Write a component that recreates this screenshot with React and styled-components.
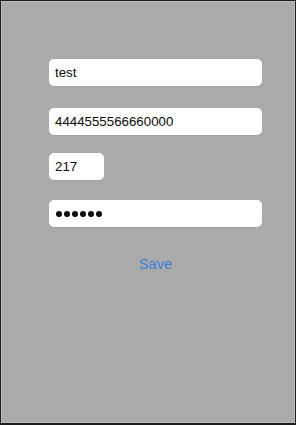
import React from "react";
import styled, { createGlobalStyle } from "styled-components";

const Global = createGlobalStyle`
  html, body { margin: 0; padding: 0; background: #1e1e1e; }
  * { box-sizing: border-box; }
`;

const Frame = styled.div`
  width: 296px;
  height: 425px;
  border: 1px solid #1e1e1e;
  border-bottom-width: 2px;
  background: #aaaaaa;
  box-shadow: inset 1px 1px 0 #bdbdbd, inset -1px -1px 0 #bdbdbd;
  padding: 58px 0 0 48px;
  font-family: "Liberation Sans", Arial, sans-serif;
`;

const Form = styled.form`
  width: 213px;
  display: flex;
  flex-direction: column;
  margin: 0;
`;

const Field = styled.input`
  width: ${(p) => p.$w || 213}px;
  height: 27px;
  margin: ${(p) => p.$mt || 0}px 0 0;
  border: none;
  border-radius: 5px;
  background: #ffffff;
  padding: 0 6px;
  font-family: "Liberation Sans", Arial, sans-serif;
  font-size: 13.3px;
  color: #0a0a0a;
  outline: none;
  box-shadow: 0 1px 0 rgba(0, 0, 0, 0.06);
`;

const PasswordBox = styled.div`
  width: 213px;
  height: 27px;
  margin-top: ${(p) => p.$mt || 0}px;
  border-radius: 5px;
  background: #ffffff;
  padding: 0 6px 0 7px;
  display: flex;
  align-items: center;
  gap: 2px;
  box-shadow: 0 1px 0 rgba(0, 0, 0, 0.06);
`;

const Dot = styled.span`
  width: 6px;
  height: 6px;
  border-radius: 50%;
  background: #0a0a0a;
`;

const SaveButton = styled.button`
  align-self: center;
  margin-top: 28px;
  height: 18px;
  padding: 0;
  border: none;
  background: transparent;
  font-family: "Liberation Sans", Arial, sans-serif;
  font-size: 14.6px;
  line-height: 18px;
  color: #3a7fd9;
  cursor: pointer;
`;

export default function App() {
  return (
    <>
      <Global />
      <Frame>
        <Form onSubmit={(e) => e.preventDefault()}>
          <Field readOnly value="test" />
          <Field readOnly value="4444555566660000" $mt={22} />
          <Field readOnly value="217" $mt={18} $w={55} />
          <PasswordBox $mt={20} aria-label="password">
            {Array.from({ length: 6 }).map((_, i) => (
              <Dot key={i} />
            ))}
          </PasswordBox>
          <SaveButton type="submit">Save</SaveButton>
        </Form>
      </Frame>
    </>
  );
}
